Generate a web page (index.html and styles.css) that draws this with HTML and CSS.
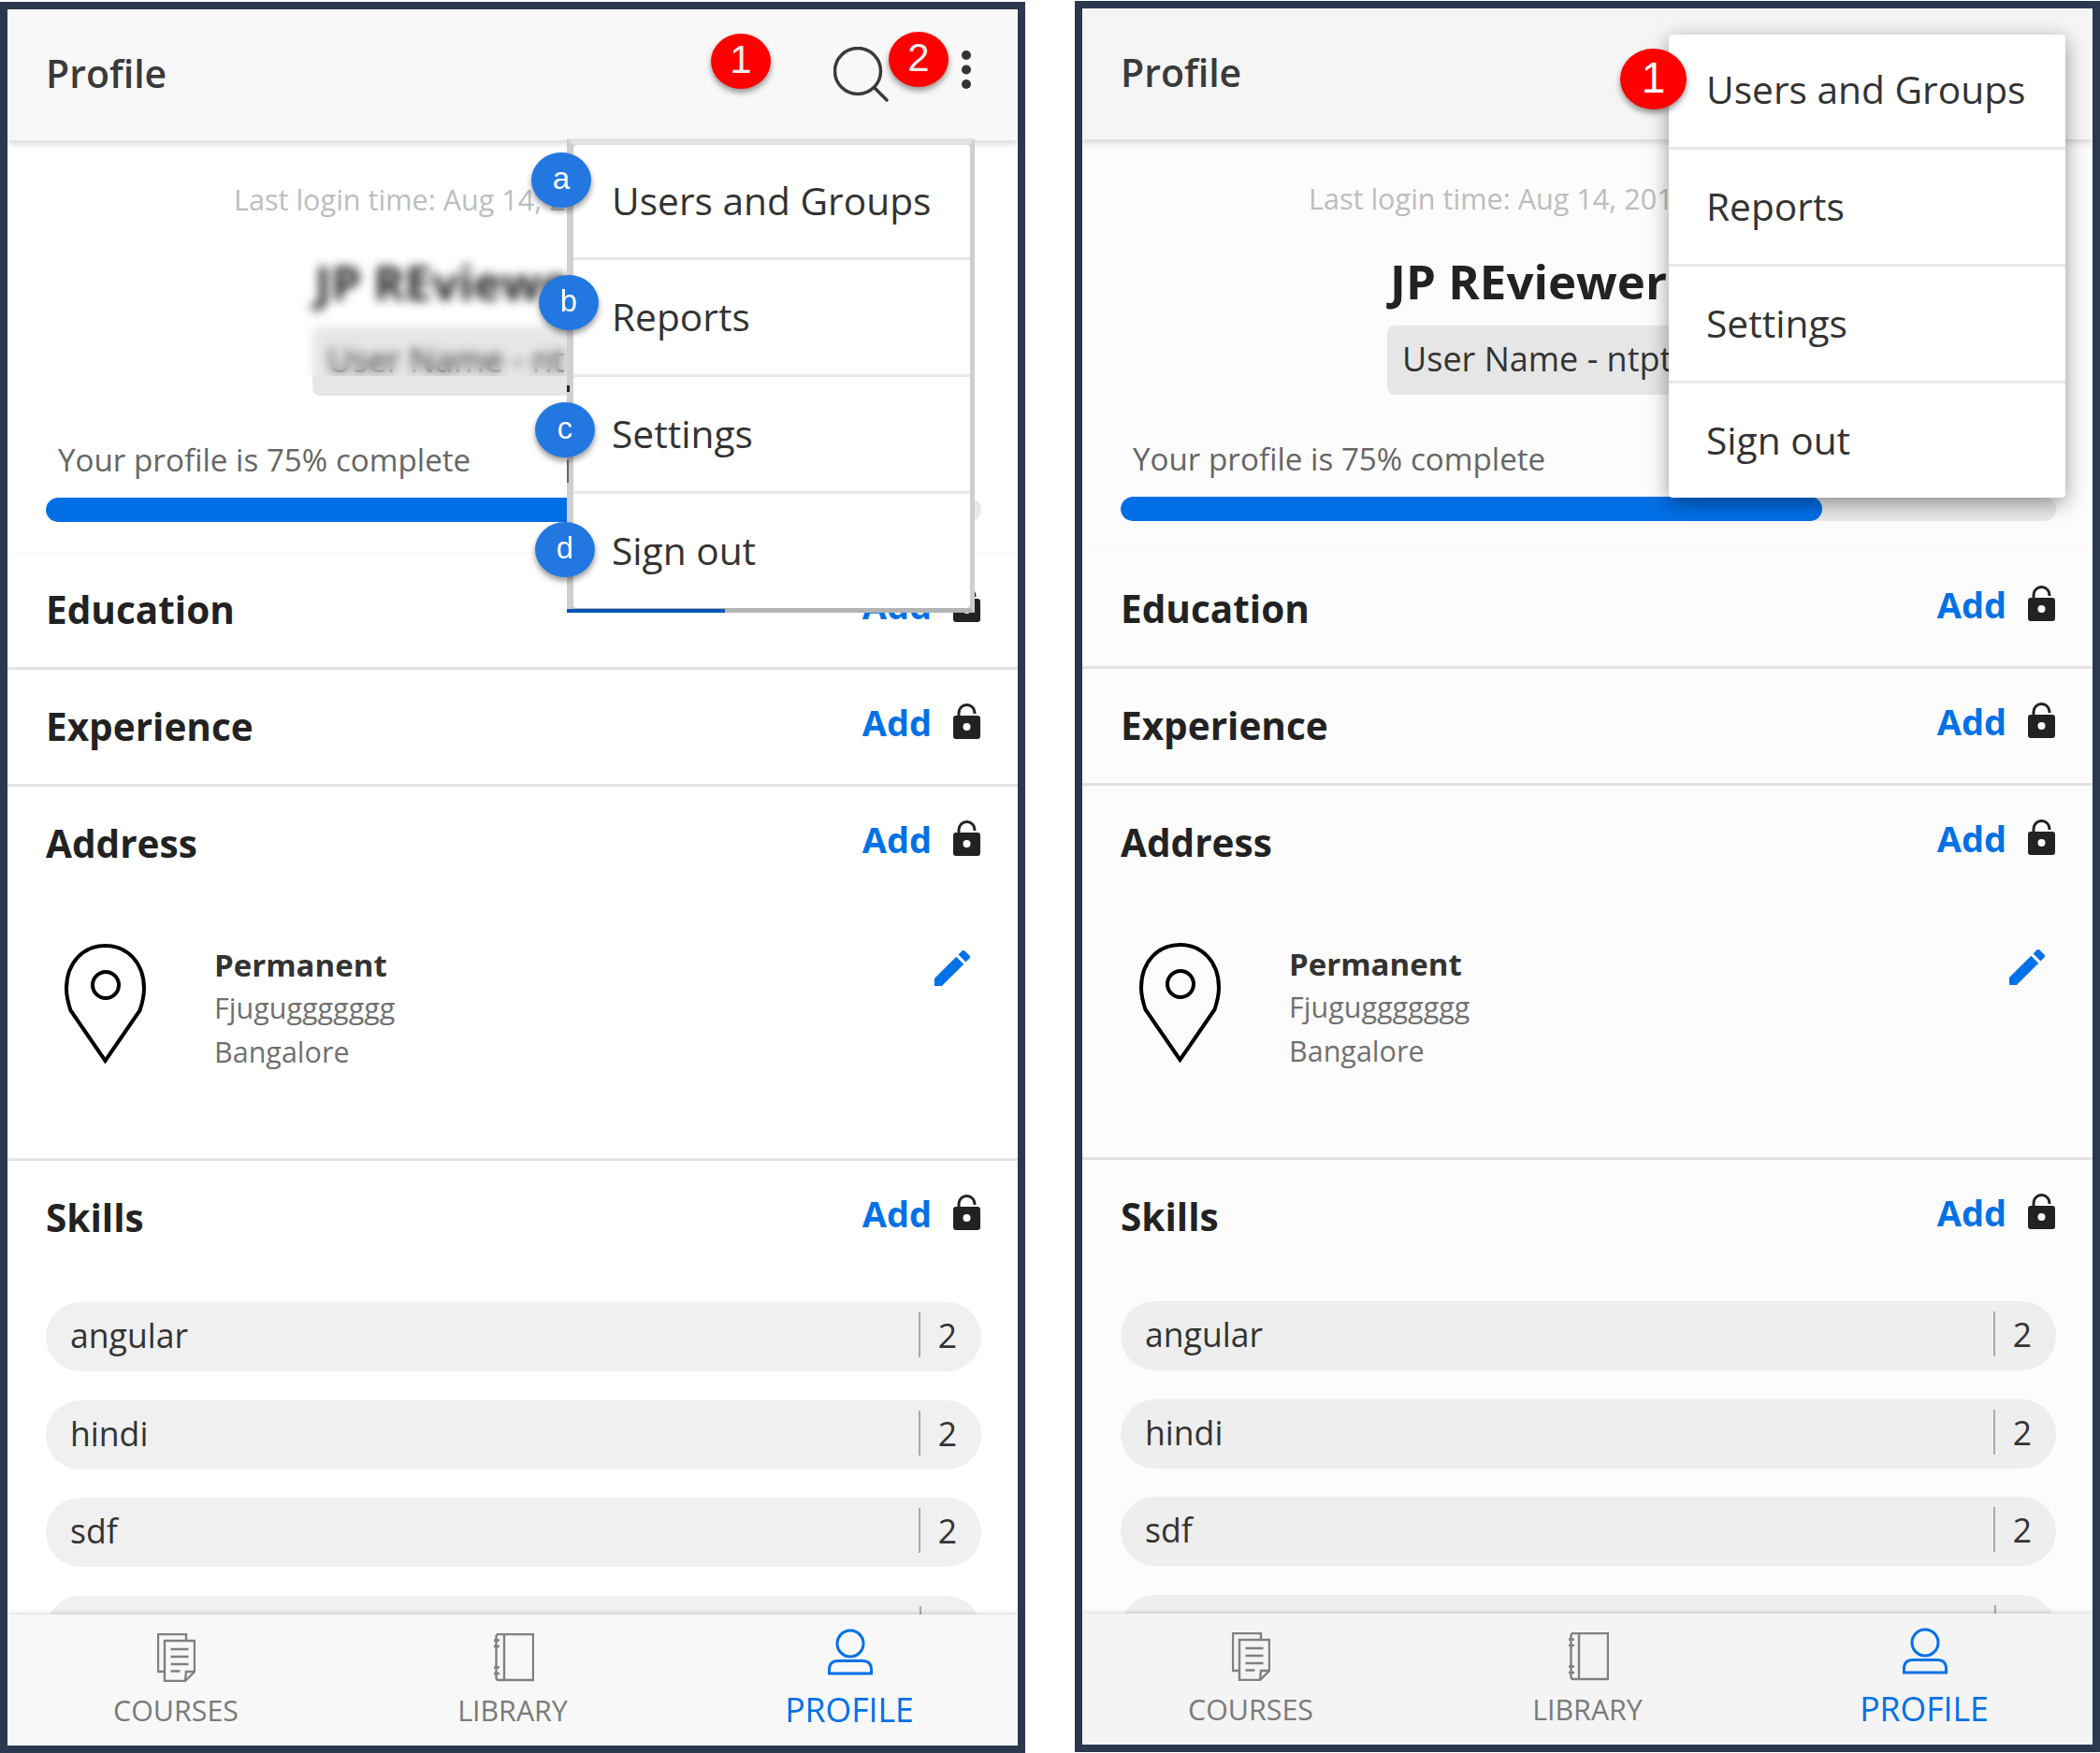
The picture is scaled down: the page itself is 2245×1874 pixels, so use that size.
FILE: index.html
```html
<!DOCTYPE html>
<html lang="en">
<head>
<meta charset="utf-8">
<title>Profile</title>
<link rel="stylesheet" href="styles.css">
</head>
<body>
<svg class="sprite" aria-hidden="true">
  <symbol id="i-lock" viewBox="0 0 29 38">
    <path fill="#222" fill-rule="evenodd" d="M3 13h23a3 3 0 0 1 3 3v19a3 3 0 0 1-3 3H3a3 3 0 0 1-3-3V16a3 3 0 0 1 3-3zm11.500 8a4 4 0 1 0 0 8 4 4 0 0 0 0-8z"/>
    <path fill="none" stroke="#222" stroke-width="3" d="M6 14v-4a8.500 8.500 0 0 1 17 0v1"/>
  </symbol>
  <symbol id="i-search" viewBox="0 0 60 60">
    <circle cx="26" cy="26" r="24.500" fill="none" stroke="#3a3a3a" stroke-width="3.500"/>
    <path d="M44 44l13 13" fill="none" stroke="#3a3a3a" stroke-width="3.500" stroke-linecap="round"/>
  </symbol>
  <symbol id="i-dots" viewBox="0 0 10 42">
    <circle cx="5" cy="5" r="5" fill="#333"/><circle cx="5" cy="20.500" r="5" fill="#333"/><circle cx="5" cy="36" r="5" fill="#333"/>
  </symbol>
  <symbol id="i-pin" viewBox="0 0 87 128">
    <path fill="none" stroke="#000" stroke-width="4" d="M6.400 71C3.500 62 2 55 2 48 2 20 20 2 43.500 2S85 20 85 48c0 7-1.500 14-4.400 23L43.500 125z"/>
    <circle cx="44" cy="44" r="14" fill="none" stroke="#000" stroke-width="4"/>
  </symbol>
  <symbol id="i-edit" viewBox="3 3 18 18">
    <path fill="#0071e6" d="M3 17.250V21h3.750L17.810 9.940l-3.750-3.750L3 17.250zM20.710 7.040c.39-.39.39-1.020 0-1.410l-2.340-2.340c-.39-.39-1.020-.39-1.410 0l-1.830 1.830 3.750 3.750 1.830-1.830z"/>
  </symbol>
  <symbol id="i-courses" viewBox="0 0 41 52">
    <g fill="none" stroke="#808080" stroke-width="2.400">
      <path d="M7.700 41H1V1h30v6.500"/>
      <path d="M8 8h32v33L30 51H8z"/>
      <path d="M40 41H31l-1 10"/>
      <path d="M14.500 17h19M14.500 25h19M14.500 33h19M14.500 40.500h10"/>
    </g>
  </symbol>
  <symbol id="i-library" viewBox="0 0 44 52">
    <g fill="none" stroke="#808080" stroke-width="2.400">
      <path d="M6 1h37v49H6a2.500 2.500 0 0 1-2.500-2.500V3.500A2.500 2.500 0 0 1 6 1z"/>
      <path d="M12 1v49"/>
      <path d="M1 7.500h6M1 14h6M1 36.500h6M1 43h6"/>
    </g>
  </symbol>
  <symbol id="i-person" viewBox="0 0 48 50">
    <g fill="none" stroke="#0071e6" stroke-width="3">
      <circle cx="24" cy="16" r="14"/>
      <path d="M1.500 48v-4Q1.500 34.500 11 34.500h26q9.500 0 9.500 9.500v4z"/>
    </g>
  </symbol>
</svg>

<main class="page">

<section class="phone phone-left">
  <header class="topbar">
    <h1 class="topbar-title">Profile</h1>
    <div class="topbar-icons">
      <svg class="icon-search"><use href="#i-search"/></svg>
      <svg class="icon-dots"><use href="#i-dots"/></svg>
    </div>
  </header>
  <div class="content">
    <div class="hero">
      <p class="login">Last login time: Aug 14, 2018</p>
      <p class="name">JP REviewer</p>
      <p class="chip">User Name - ntpt</p>
      <p class="progress-label">Your profile is 75% complete</p>
      <div class="progress"><div class="progress-fill" style="width:75%"></div></div>
    </div>
    <div class="section">
      <div class="section-head"><h2 class="section-title">Education</h2><div class="section-actions"><span class="add">Add</span><svg class="icon-lock"><use href="#i-lock"/></svg></div></div>
    </div>
    <div class="section">
      <div class="section-head"><h2 class="section-title">Experience</h2><div class="section-actions"><span class="add">Add</span><svg class="icon-lock"><use href="#i-lock"/></svg></div></div>
    </div>
    <div class="section section-address">
      <div class="section-head"><h2 class="section-title">Address</h2><div class="section-actions"><span class="add">Add</span><svg class="icon-lock"><use href="#i-lock"/></svg></div></div>
      <div class="address">
        <svg class="icon-pin"><use href="#i-pin"/></svg>
        <div class="address-text">
          <p class="address-kind">Permanent</p>
          <p class="address-line">Fjuguggggggg</p>
          <p class="address-line">Bangalore</p>
        </div>
        <svg class="icon-edit"><use href="#i-edit"/></svg>
      </div>
    </div>
    <div class="section section-skills">
      <div class="section-head"><h2 class="section-title">Skills</h2><div class="section-actions"><span class="add">Add</span><svg class="icon-lock"><use href="#i-lock"/></svg></div></div>
      <ul class="skills">
        <li class="skill"><span class="skill-name">angular</span><span class="skill-count">2</span></li>
        <li class="skill"><span class="skill-name">hindi</span><span class="skill-count">2</span></li>
        <li class="skill"><span class="skill-name">sdf</span><span class="skill-count">2</span></li>
        <li class="skill skill-peek"><span class="skill-name"></span><span class="skill-count"></span></li>
      </ul>
    </div>
  </div>
  <nav class="tabs">
    <a class="tab"><svg class="icon-courses"><use href="#i-courses"/></svg><span class="tab-label">COURSES</span></a>
    <a class="tab"><svg class="icon-library"><use href="#i-library"/></svg><span class="tab-label">LIBRARY</span></a>
    <a class="tab tab-active"><svg class="icon-person"><use href="#i-person"/></svg><span class="tab-label">PROFILE</span></a>
  </nav>

  <div class="blur-patch"></div>
  <div class="menu-frame">
    <span class="menu-strip"></span>
    <span class="menu-speck menu-speck-a"></span>
    <span class="menu-speck menu-speck-b"></span>
    <ul class="menu">
      <li class="menu-item">Users and Groups</li>
      <li class="menu-item">Reports</li>
      <li class="menu-item">Settings</li>
      <li class="menu-item">Sign out</li>
    </ul>
  </div>
  <span class="badge badge-red badge-one">1</span>
  <span class="badge badge-red badge-two">2</span>
  <span class="badge badge-blue badge-a">a</span>
  <span class="badge badge-blue badge-b">b</span>
  <span class="badge badge-blue badge-c">c</span>
  <span class="badge badge-blue badge-d">d</span>
</section>

<section class="phone phone-right">
  <header class="topbar">
    <h1 class="topbar-title">Profile</h1>
    <div class="topbar-icons">
      <svg class="icon-search"><use href="#i-search"/></svg>
      <svg class="icon-dots"><use href="#i-dots"/></svg>
    </div>
  </header>
  <div class="content">
    <div class="hero">
      <p class="login">Last login time: Aug 14, 2018</p>
      <p class="name">JP REviewer</p>
      <p class="chip">User Name - ntpt</p>
      <p class="progress-label">Your profile is 75% complete</p>
      <div class="progress"><div class="progress-fill" style="width:75%"></div></div>
    </div>
    <div class="section">
      <div class="section-head"><h2 class="section-title">Education</h2><div class="section-actions"><span class="add">Add</span><svg class="icon-lock"><use href="#i-lock"/></svg></div></div>
    </div>
    <div class="section">
      <div class="section-head"><h2 class="section-title">Experience</h2><div class="section-actions"><span class="add">Add</span><svg class="icon-lock"><use href="#i-lock"/></svg></div></div>
    </div>
    <div class="section section-address">
      <div class="section-head"><h2 class="section-title">Address</h2><div class="section-actions"><span class="add">Add</span><svg class="icon-lock"><use href="#i-lock"/></svg></div></div>
      <div class="address">
        <svg class="icon-pin"><use href="#i-pin"/></svg>
        <div class="address-text">
          <p class="address-kind">Permanent</p>
          <p class="address-line">Fjuguggggggg</p>
          <p class="address-line">Bangalore</p>
        </div>
        <svg class="icon-edit"><use href="#i-edit"/></svg>
      </div>
    </div>
    <div class="section section-skills">
      <div class="section-head"><h2 class="section-title">Skills</h2><div class="section-actions"><span class="add">Add</span><svg class="icon-lock"><use href="#i-lock"/></svg></div></div>
      <ul class="skills">
        <li class="skill"><span class="skill-name">angular</span><span class="skill-count">2</span></li>
        <li class="skill"><span class="skill-name">hindi</span><span class="skill-count">2</span></li>
        <li class="skill"><span class="skill-name">sdf</span><span class="skill-count">2</span></li>
        <li class="skill skill-peek"><span class="skill-name"></span><span class="skill-count"></span></li>
      </ul>
    </div>
  </div>
  <nav class="tabs">
    <a class="tab"><svg class="icon-courses"><use href="#i-courses"/></svg><span class="tab-label">COURSES</span></a>
    <a class="tab"><svg class="icon-library"><use href="#i-library"/></svg><span class="tab-label">LIBRARY</span></a>
    <a class="tab tab-active"><svg class="icon-person"><use href="#i-person"/></svg><span class="tab-label">PROFILE</span></a>
  </nav>

  <ul class="menu menu-open">
    <li class="menu-item">Users and Groups</li>
    <li class="menu-item">Reports</li>
    <li class="menu-item">Settings</li>
    <li class="menu-item">Sign out</li>
  </ul>
  <span class="badge badge-red badge-menu">1</span>
</section>

</main>
</body>
</html>
```

FILE: styles.css
```css
* { box-sizing: border-box; }

html, body {
  margin: 0;
  padding: 0;
  background: #fff;
}

body {
  width: 2245px;
  height: 1874px;
  overflow: hidden;
  font-family: "Open Sans", "Liberation Sans", sans-serif;
  color: #222;
}

p, h1, h2, ul { margin: 0; padding: 0; }
ul { list-style: none; }

.sprite { position: absolute; width: 0; height: 0; overflow: hidden; }

.page {
  display: flex;
  justify-content: space-between;
  align-items: flex-start;
  padding-top: 2px;
}

.phone {
  position: relative;
  display: flex;
  flex-direction: column;
  width: 1096px;
  height: 1872px;
  border: 8px solid #2c384e;
  overflow: hidden;
  background: #fff;
}

.phone-right {
  margin-top: -1px;
  background: #fcfcfc;
}

/* top bar */
.topbar {
  position: relative;
  z-index: 2;
  flex: none;
  display: flex;
  align-items: center;
  height: 140px;
  padding: 0 50px 0 41px;
  background: #f8f8f8;
  box-shadow: 0 3px 8px rgba(0, 0, 0, .18);
}

.phone-right .topbar { background: #f5f5f5; }

.topbar-title {
  font-size: 41px;
  font-weight: 600;
  line-height: 56px;
  color: #3a3a3a;
  margin-bottom: 5px;
}

.topbar-icons {
  margin-left: auto;
  display: flex;
  align-items: flex-start;
  gap: 77px;
}

.icon-search { width: 60px; height: 60px; }
.icon-dots { width: 10px; height: 42px; margin-top: 4px; }

/* scrolling body */
.content {
  flex: 1;
  min-height: 0;
  overflow: hidden;
}

.hero {
  display: flex;
  flex-direction: column;
  align-items: flex-start;
  padding: 41px 39px 31px 41px;
  border-bottom: 1px solid #f7f7f7;
  height: 441px;
}

.login {
  margin-left: 201px;
  font-size: 30.600px;
  line-height: 44px;
  color: #bdbdbd;
  white-space: nowrap;
}

.name {
  margin: 31px 0 0 288px;
  font-size: 51px;
  font-weight: 700;
  line-height: 70px;
  color: #222;
  white-space: nowrap;
}

.chip {
  margin: 13px 0 0 285px;
  width: 640px;
  height: 74px;
  padding: 0 16px;
  border-radius: 8px;
  background: #e6e6e6;
  font-size: 36px;
  line-height: 72px;
  color: #333;
  white-space: nowrap;
  overflow: hidden;
}

.progress-label {
  margin: 47px 0 0 13px;
  font-size: 33.200px;
  line-height: 44px;
  color: #666;
  white-space: nowrap;
}

.progress {
  width: 100%;
  height: 26px;
  margin-top: 18px;
  border-radius: 13px;
  background: #e8eaea;
  overflow: hidden;
}

.progress-fill {
  height: 100%;
  border-radius: 13px;
  background: #006fe6;
}

/* sections */
.section {
  height: 125px;
  border-bottom: 3px solid #e2e2e2;
}

.section-address { height: 400px; }
.section-skills { height: auto; border-bottom: 0; }

.section-head {
  display: flex;
  justify-content: space-between;
  align-items: flex-start;
  padding: 33px 40px 0 41px;
}

.section-title {
  font-size: 40.500px;
  font-weight: 700;
  line-height: 56px;
  color: #222;
}

.section-actions {
  display: flex;
  align-items: flex-start;
  gap: 23px;
  margin-top: -3px;
}

.add {
  font-size: 38px;
  font-weight: 700;
  line-height: 52px;
  color: #0071e6;
}

.icon-lock { width: 29px; height: 38px; margin-top: 5.500px; }

/* address */
.address {
  display: flex;
  align-items: flex-start;
  padding: 79px 51px 0 60px;
}

.icon-pin { flex: none; width: 89px; height: 128px; }

.address-text { flex: 1; margin-left: 72px; }

.address-kind {
  font-size: 33px;
  font-weight: 700;
  line-height: 45px;
  color: #333;
}

.address-line {
  font-size: 30.500px;
  line-height: 47px;
  color: #707070;
}

.icon-edit { flex: none; width: 38px; height: 38px; margin-top: 7px; }

/* skills */
.skills {
  display: flex;
  flex-direction: column;
  gap: 30.500px;
  padding: 62px 39px 0 41px;
}

.skill {
  flex: none;
  display: flex;
  align-items: center;
  height: 74px;
  padding: 0 26px 4px;
  border-radius: 37px;
  background: #f0f0f0;
  font-size: 35.600px;
  color: #333;
}

.phone-right .skill { background: #eeeeee; }

.skill-name { flex: 1; }

.skill-count {
  display: flex;
  align-items: center;
  height: 48px;
  padding-left: 19px;
  border-left: 2px solid #aaa;
}

.skill-peek .skill-count { width: 40px; }

/* bottom tabs */
.tabs {
  position: relative;
  z-index: 2;
  flex: none;
  display: grid;
  grid-template-columns: repeat(3, 1fr);
  height: 140px;
  background: #f8f8f8;
  box-shadow: 0 -2px 4px rgba(0, 0, 0, .12);
}

.phone-right .tabs { background: #f4f4f4; }

.tab {
  display: flex;
  flex-direction: column;
  align-items: center;
  color: #7a7a7a;
}

.icon-courses { width: 41px; height: 52px; margin-top: 20px; }
.icon-library { width: 44px; height: 52px; margin: 20px 0 0 2px; }
.icon-person { width: 48px; height: 50px; margin: 15px 0 0 2px; }

.tab-label {
  margin-top: 11px;
  font-size: 30.400px;
  line-height: 40px;
}

.tab-active { color: #0071e6; }
.tab-active .tab-label { margin-top: 16px; font-size: 35.600px; }

/* popup menu */
.menu {
  border-radius: 4px;
  background: #fff;
}

.menu-frame {
  position: absolute;
  z-index: 3;
  left: 598px;
  top: 138px;
  width: 436px;
  height: 507px;
  border-style: solid;
  border-width: 7px 5px 5px 7px;
  border-color: #e2e2e2 #cfcfcf #b4b4b4 #cfcfcf;
  background: #cfcfcf;
}

.menu-strip {
  position: absolute;
  left: -7px;
  bottom: -5px;
  width: 169px;
  height: 4px;
  background: #0056b3;
}

.menu-speck {
  position: absolute;
  left: -7px;
  width: 3px;
  background: #222;
}

.menu-speck-a { top: 257px; height: 7px; }
.menu-speck-b { top: 337px; height: 24px; width: 2px; background: #666; }

.menu-open {
  position: absolute;
  z-index: 3;
  left: 627px;
  top: 28px;
  width: 424px;
  box-shadow: 0 6px 22px rgba(0, 0, 0, .4);
}

.menu-item {
  display: flex;
  align-items: center;
  height: 125px;
  padding: 0 0 2px 41px;
  font-size: 40.700px;
  color: #333;
  border-bottom: 3px solid #e8e8e8;
}

.menu-item:first-child { height: 123px; }
.menu-item:last-child { height: 122px; border-bottom: 0; }

.menu-open .menu-item { padding: 0 0 3px 40px; }
.menu-open .menu-item:first-child { padding-bottom: 5px; }

/* annotation badges */
.badge {
  position: absolute;
  z-index: 4;
  display: flex;
  align-items: center;
  justify-content: center;
  width: 64px;
  height: 59px;
  border-radius: 50%;
  padding-bottom: 4px;
  font-family: "Liberation Sans", Arial, sans-serif;
  color: #fff;
  box-shadow: 0 4px 6px rgba(0, 0, 0, .4);
}

.badge-red { background: #fe0000; font-size: 42px; color: #eee; }
.badge-blue { background: #2277e0; font-size: 33px; }

.badge-one { left: 752px; top: 26px; }
.badge-two { left: 942px; top: 24px; }
.badge-a { left: 560px; top: 153px; }
.badge-b { left: 568px; top: 284px; }
.badge-c { left: 564px; top: 420px; }
.badge-d { left: 564px; top: 548px; }

.badge-menu {
  left: 575px;
  top: 43px;
  width: 71px;
  height: 65px;
  font-size: 46px;
  color: #fff;
}

/* privacy blur over name in the annotated frame */
.blur-patch {
  position: absolute;
  z-index: 2;
  left: 310px;
  top: 250px;
  width: 288px;
  height: 142px;
  -webkit-backdrop-filter: blur(5.500px);
  backdrop-filter: blur(5.500px);
}
```
